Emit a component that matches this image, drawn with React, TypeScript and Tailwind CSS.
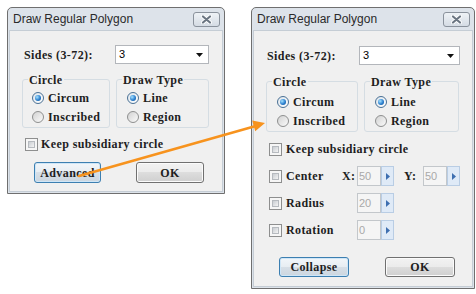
import React from "react";

const T =
  "font-['Liberation_Serif',serif] font-bold text-[12px] tracking-[0.4px] text-[#1e1e1e] leading-none whitespace-nowrap";

function Radio({ checked }: { checked?: boolean }) {
  return (
    <span
      className={
        checked
          ? "w-[12px] h-[12px] rounded-full border border-[#4a7094] bg-linear-to-br from-[#dde5ec] to-[#ffffff] flex items-center justify-center shrink-0"
          : "w-[12px] h-[12px] rounded-full border border-[#8e8f8f] bg-linear-to-br from-[#d2d2d2] to-[#fbfbfb] flex items-center justify-center shrink-0"
      }
    >
      {checked && (
        <span className="w-[6px] h-[6px] rounded-full bg-[radial-gradient(circle_at_35%_35%,#a6e3ff_0%,#2b7fcf_55%,#0e4c8c_100%)]" />
      )}
    </span>
  );
}

function Check() {
  return (
    <span className="w-[13px] h-[13px] border border-[#8e8f8f] bg-[#f6f6f6] p-[2px] shrink-0 flex">
      <span className="flex-1 border border-[#b6babf] bg-linear-to-br from-[#c9cdd2] to-[#f4f4f4]" />
    </span>
  );
}

function CloseBtn() {
  return (
    <div className="w-[27px] h-[15px] rounded-[3px] border border-[#8a929c] bg-linear-to-b from-[#eef2f6] to-[#d5dce4] flex items-center justify-center">
      <svg width="11" height="9" viewBox="0 0 11 9">
        <path d="M2 1.5L9 7.5M9 1.5L2 7.5" stroke="#ffffff" strokeWidth="3.8" strokeLinecap="round" />
        <path d="M2 1.5L9 7.5M9 1.5L2 7.5" stroke="#6b7682" strokeWidth="2.2" strokeLinecap="round" />
      </svg>
    </div>
  );
}

function Combo({ w }: { w: string }) {
  return (
    <div className={`${w} h-[19px] border border-[#b3b6bb] bg-white flex items-center justify-between pl-[3px] pr-[5px]`}>
      <span className="font-['Liberation_Sans',sans-serif] text-[11px] text-black leading-none">3</span>
      <svg width="7" height="4" viewBox="0 0 7 4">
        <path d="M0 0H7L3.5 4Z" fill="#111" />
      </svg>
    </div>
  );
}

function Btn({ label, w, def }: { label: string; w: string; def?: boolean }) {
  return (
    <div
      className={
        def
          ? `${w} h-full rounded-[3px] border border-[#3c7fb1] bg-[linear-gradient(#f2f6fa_0%,#e7edf2_50%,#d7dfe7_50%,#ccd6df_100%)] flex items-center justify-center shadow-[inset_0_0_0_1px_#cfe6f7]`
          : `${w} h-full rounded-[3px] border border-[#707070] bg-[linear-gradient(#f2f2f2_0%,#ebebeb_50%,#dddddd_50%,#cfcfcf_100%)] flex items-center justify-center shadow-[inset_0_0_0_1px_#fbfbfb]`
      }
    >
      <span className={T}>{label}</span>
    </div>
  );
}

function Spin({ v }: { v: string }) {
  return (
    <div className="flex h-[20px]">
      <div className="w-[24px] border border-[#c3c7cb] bg-[#f5f5f5] flex items-center pl-[1px] font-['Liberation_Sans',sans-serif] text-[11px] text-[#a9a9a9] leading-none">
        {v}
      </div>
      <div className="w-[13px] border border-[#b9cde4] bg-[#dfeaf7] flex items-center justify-center">
        <svg width="4" height="7" viewBox="0 0 4 7">
          <path d="M0 0L4 3.5L0 7Z" fill="#3e6fb0" />
        </svg>
      </div>
    </div>
  );
}

function Group({
  label,
  cls,
  opts,
}: {
  label: string;
  cls: string;
  opts: [string, boolean][];
}) {
  return (
    <div className={`relative border border-[#d5dde3] rounded-[3px] flex flex-col ${cls}`}>
      <span className={`absolute left-[5px] top-[-6px] bg-[#f0f0f0] px-[1px] ${T}`}>{label}</span>
      {opts.map(([t, c]) => (
        <div key={t} className="h-[19px] flex items-center gap-[4px]">
          <Radio checked={c} />
          <span className={T}>{t}</span>
        </div>
      ))}
    </div>
  );
}

function Frame({ cls, children }: { cls: string; children: React.ReactNode }) {
  return (
    <div className={`absolute border border-[#6f6f6f] rounded-t-[5px] bg-[#dde3ea] px-[1px] pb-[1px] flex flex-col ${cls}`}>
      <div className="h-[22px] shrink-0 flex items-center justify-between pl-[4px] pr-[3px]">
        <span className="font-['Liberation_Sans',sans-serif] text-[12px] text-[#2a2a2a] leading-none">
          Draw Regular Polygon
        </span>
        <CloseBtn />
      </div>
      <div className="flex-1 border border-[#c5cdd5] bg-[#f0f0f0] flex flex-col px-[12px]">{children}</div>
    </div>
  );
}

export default function App() {
  return (
    <div className="relative w-[476px] h-[294px] bg-white overflow-hidden">
      {/* Dialog 1 */}
      <Frame cls="left-[7px] top-[7px] w-[218px] h-[187px]">
        <div className="pt-[14px] flex items-center h-[33px]">
          <span className={`w-[93px] pl-[2px] ${T}`}>Sides (3-72):</span>
          <Combo w="w-[94px]" />
        </div>
        <div className="mt-[15px] flex gap-[6px]">
          <Group
            label="Circle"
            cls="w-[88px] h-[49px] pt-[8px] pl-[9px]"
            opts={[
              ["Circum", true],
              ["Inscribed", false],
            ]}
          />
          <Group
            label="Draw Type"
            cls="w-[93px] h-[49px] pt-[8px] pl-[10px]"
            opts={[
              ["Line", true],
              ["Region", false],
            ]}
          />
        </div>
        <div className="mt-[6px] h-[20px] flex items-center gap-[3px] pl-[3px]">
          <Check />
          <span className={T}>Keep subsidiary circle</span>
        </div>
        <div className="mt-[8px] h-[21px] flex pl-[12px] gap-[35px]">
          <Btn label="Advanced" w="w-[67px]" def />
          <Btn label="OK" w="w-[68px]" />
        </div>
      </Frame>

      {/* Dialog 2 */}
      <Frame cls="left-[251px] top-[7px] w-[224px] h-[282px]">
        <div className="pt-[15px] flex items-center h-[34px]">
          <span className={`w-[93px] pl-[1px] ${T}`}>Sides (3-72):</span>
          <Combo w="w-[101px]" />
        </div>
        <div className="mt-[16px] flex gap-[6px]">
          <Group
            label="Circle"
            cls="w-[92px] h-[51px] pt-[10px] pl-[10px]"
            opts={[
              ["Circum", true],
              ["Inscribed", false],
            ]}
          />
          <Group
            label="Draw Type"
            cls="w-[95px] h-[51px] pt-[10px] pl-[10px]"
            opts={[
              ["Line", true],
              ["Region", false],
            ]}
          />
        </div>
        <div className="mt-[7px] flex flex-col gap-[7px] pl-[3px]">
          <div className="h-[20px] flex items-center">
            <Check />
            <span className={`ml-[4px] ${T}`}>Keep subsidiary circle</span>
          </div>
          <div className="h-[20px] flex items-center">
            <Check />
            <span className={`ml-[4px] w-[56px] ${T}`}>Center</span>
            <span className={`w-[15px] ${T}`}>X:</span>
            <Spin v="50" />
            <span className={`ml-[10px] w-[19px] ${T}`}>Y:</span>
            <Spin v="50" />
          </div>
          <div className="h-[20px] flex items-center">
            <Check />
            <span className={`ml-[4px] w-[71px] ${T}`}>Radius</span>
            <Spin v="20" />
          </div>
          <div className="h-[20px] flex items-center">
            <Check />
            <span className={`ml-[4px] w-[71px] ${T}`}>Rotation</span>
            <Spin v="0" />
          </div>
        </div>
        <div className="mt-[17px] h-[20px] flex pl-[13px] gap-[36px]">
          <Btn label="Collapse" w="w-[70px]" def />
          <Btn label="OK" w="w-[70px]" />
        </div>
      </Frame>

      {/* Arrow overlay */}
      <svg className="absolute inset-0 pointer-events-none" width="476" height="294" viewBox="0 0 476 294">
        <line x1="79" y1="176" x2="254" y2="126.5" stroke="#f7931e" strokeWidth="2.6" strokeLinecap="round" />
        <path d="M265 123 L252.2 120.6 L255.2 131.2 Z" fill="#f7931e" />
      </svg>
    </div>
  );
}
